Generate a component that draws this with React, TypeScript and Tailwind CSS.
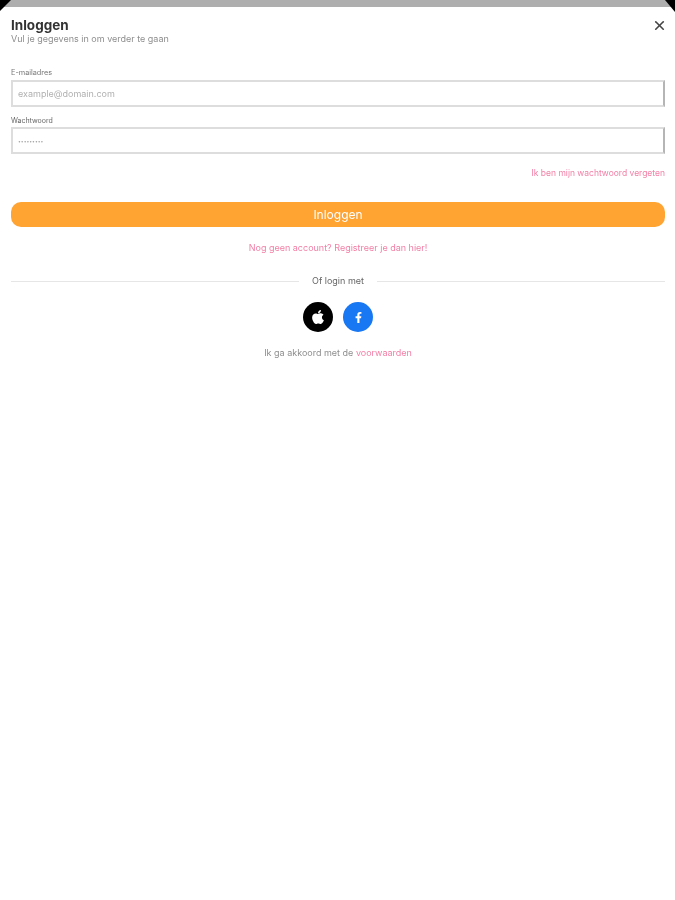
import { X } from 'lucide-react';
import { FaApple, FaFacebookF } from 'react-icons/fa';

export default function App() {
  return (
    <div className="relative h-[900px] bg-[#aeaeae] pt-[7px] font-['Inter','Noto_Sans',sans-serif]">
      <div className="h-full bg-white pl-[11px] pr-[10px] blur-[0.7px]">
        {/* Header */}
        <div className="relative pt-[10px]">
          <h1 className="text-[13.5px] leading-[17px] font-bold text-[#333333]">Inloggen</h1>
          <p className="text-[9px] leading-[12px] text-[#8e8e8e] -mt-[1px]">Vul je gegevens in om verder te gaan</p>
          <button className="absolute -right-[2px] top-[11px] text-[#444444]">
            <X size={15} strokeWidth={2.6} />
          </button>
        </div>

        {/* Form */}
        <div className="mt-[23px]">
          <label className="block text-[7.3px] leading-[10px] text-[#777777]">E-mailadres</label>
          <input
            placeholder="example@domain.com"
            className="block w-full h-[27px] mt-[2px] px-[5px] border-2 border-[#dddddd] border-r-[#b5b5b5] text-[9px] placeholder:text-[#b0b0b0] outline-none"
          />
          <label className="block text-[7px] leading-[10px] text-[#666666] mt-[9px]">Wachtwoord</label>
          <input
            placeholder="•••••••••"
            className="block w-full h-[27px] mt-[1px] px-[5px] border-2 border-[#dddddd] border-r-[#b5b5b5] text-[5px] placeholder:text-[#a0a0a0] outline-none"
          />
          <div className="text-right text-[8.5px] leading-[12px] text-[#f27fa5] mt-[13px]">Ik ben mijn wachtwoord vergeten</div>
        </div>

        <button className="block w-full h-[25px] mt-[23px] rounded-[10px] bg-[#ffa333] text-white text-[12px]">Inloggen</button>

        <p className="text-center text-[9px] leading-[12px] text-[#f27fa5] mt-[15px]">Nog geen account? Registreer je dan hier!</p>

        {/* Divider */}
        <div className="flex items-center gap-[13px] mt-[21px]">
          <div className="flex-1 h-px bg-[#e6e6e6]" />
          <span className="text-[9px] leading-[12px] text-[#666666]">Of login met</span>
          <div className="flex-1 h-px bg-[#e6e6e6]" />
        </div>

        <div className="flex justify-center gap-[10px] mt-[15px]">
          <button className="w-[30px] h-[30px] rounded-full bg-black text-white flex items-center justify-center">
            <FaApple size={16} />
          </button>
          <button className="w-[30px] h-[30px] rounded-full bg-[#1877f2] text-white flex items-center justify-center">
            <FaFacebookF size={11} />
          </button>
        </div>

        <p className="text-center text-[9px] leading-[12px] text-[#8e8e8e] mt-[15px]">
          Ik ga akkoord met de <span className="text-[#f27fa5]">voorwaarden</span>
        </p>
      </div>

      {/* black screen corners */}
      <svg className="absolute left-0 top-0" width="11" height="11" viewBox="0 0 11 11">
        <polygon points="0,0 11,0 0,11" fill="#000" />
      </svg>
      <svg className="absolute right-0 top-0" width="10" height="12" viewBox="0 0 10 12">
        <polygon points="0,0 10,0 10,12" fill="#000" />
      </svg>
    </div>
  );
}
